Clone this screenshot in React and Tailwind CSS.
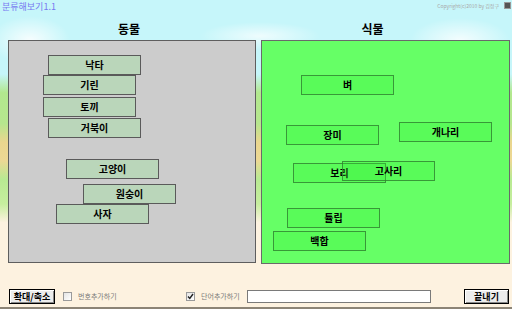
import React from "react";

const font = { fontFamily: '"Noto Sans CJK KR", "Noto Sans", sans-serif' };

const animals = [
  { name: "낙타", left: 39, top: 14 },
  { name: "기린", left: 34, top: 34 },
  { name: "토끼", left: 34, top: 56 },
  { name: "거북이", left: 39, top: 77 },
  { name: "고양이", left: 57, top: 118 },
  { name: "원숭이", left: 74, top: 143 },
  { name: "사자", left: 47, top: 163 },
];

const plants = [
  { name: "벼", left: 39, top: 34 },
  { name: "장미", left: 24, top: 84 },
  { name: "개나리", left: 137, top: 81 },
  { name: "보리", left: 31, top: 122 },
  { name: "고사리", left: 80, top: 120 },
  { name: "튤립", left: 25, top: 167 },
  { name: "백합", left: 11, top: 190 },
];

function Word({ item, plant }) {
  return (
    <div
      className={
        plant
          ? "absolute w-[93px] h-[20px] flex items-center justify-center border border-[#2f7f2f]/80 bg-[#33ee33]/25 text-[10px] font-bold text-black"
          : "absolute w-[93px] h-[20px] flex items-center justify-center border border-[#5a5a5a] bg-[#bad6ba] text-[10px] font-bold text-black"
      }
      style={{ left: item.left, top: item.top }}
    >
      {item.name}
    </div>
  );
}

function Checkbox({ checked, label }) {
  return (
    <div className="flex items-center gap-[6px]">
      <div className="w-[9px] h-[9px] border border-[#9a9a9a] bg-gradient-to-br from-[#e4e4e4] to-white flex items-center justify-center">
        {checked && (
          <svg width="7" height="7" viewBox="0 0 7 7">
            <path d="M1 3.5 L2.8 5.5 L6 1" stroke="#222" strokeWidth="1.4" fill="none" />
          </svg>
        )}
      </div>
      <span className="w-[44px] text-[7px] text-[#7a7a7a] leading-none whitespace-nowrap">{label}</span>
    </div>
  );
}

function BevelButton({ children, width }) {
  return (
    <div
      className={`${width} h-[15px] border border-black bg-[#ececec] flex items-center justify-center shadow-[inset_1px_1px_0_#fff,inset_-1px_-1px_0_#888]`}
    >
      <span className="text-[9px] font-bold text-black leading-none">{children}</span>
    </div>
  );
}

export default function App() {
  return (
    <div
      className="w-[512px] h-[309px] overflow-hidden flex flex-col bg-[radial-gradient(ellipse_40px_24px_at_30px_40px,rgba(255,255,255,0.85),transparent),radial-gradient(ellipse_50px_22px_at_460px_40px,rgba(255,255,255,0.8),transparent),radial-gradient(ellipse_60px_14px_at_260px_36px,rgba(255,255,255,0.7),transparent),linear-gradient(to_bottom,#c6f6fa_0%,#c6f6fa_24%,#b2e88e_30%,#b6e68e_40%,#ead68e_46%,#ecd894_52%,#b8ea92_58%,#c6ee9e_66%,#fdf2e0_72%,#fdf2e0_100%)]"
      style={font}
    >
      {/* top strip */}
      <div className="h-[22px] flex items-start justify-between pl-[2px] pr-[1px] pt-[1px]">
        <span className="text-[9px] text-[#7878f0] leading-[11px]">분류해보기1.1</span>
        <div className="flex items-center gap-[5px] pt-[1px]">
          <span className="text-[5px] text-[#a8a8a8] leading-none">Copyright(c)2010 by 김정구</span>
          <div className="w-[7px] h-[7px] bg-[#555] border border-[#999]" />
        </div>
      </div>

      {/* panels */}
      <div className="flex pl-[8px] gap-[5px]">
        <div className="w-[248px] flex flex-col">
          <div className="h-[19px] flex justify-center pr-[6px] text-[12px] font-bold text-black leading-[15px]">동물</div>
          <div className="relative h-[223px] border border-[#5e5e5e] bg-[#cccccc]">
            {animals.map((a) => (
              <Word key={a.name} item={a} />
            ))}
          </div>
        </div>
        <div className="w-[249px] flex flex-col">
          <div className="h-[19px] flex justify-center pr-[26px] text-[12px] font-bold text-black leading-[15px]">식물</div>
          <div className="relative h-[224px] border border-[#6a6a6a] bg-[#66ff66]">
            {plants.map((p) => (
              <Word key={p.name} item={p} plant />
            ))}
          </div>
        </div>
      </div>

      {/* controls */}
      <div className="mt-[24px] h-[18px] flex items-center pl-[9px] pr-[3px]">
        <BevelButton width="w-[46px]">확대/축소</BevelButton>
        <div className="ml-[8px]">
          <Checkbox label="번호추가하기" />
        </div>
        <div className="ml-[64px]">
          <Checkbox checked label="단어추가하기" />
        </div>
        <div className="ml-[2px] w-[184px] h-[13px] border border-[#7a7a7a] bg-white" />
        <div className="ml-auto">
          <BevelButton width="w-[45px]">끝내기</BevelButton>
        </div>
      </div>
      <div className="mt-[2px] h-[2px] bg-[#8c8476]" />
    </div>
  );
}
